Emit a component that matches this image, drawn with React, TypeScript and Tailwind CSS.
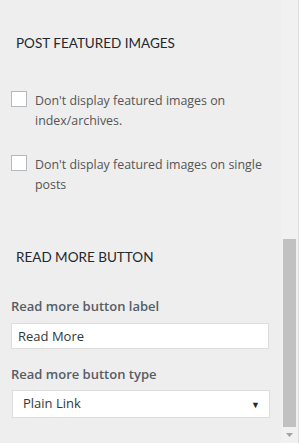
import { useState } from 'react';

const font = { fontFamily: '"Open Sans", "Noto Sans", sans-serif' };
const headFont = { fontFamily: 'Lato, "Open Sans", sans-serif' };

function CheckRow({ label }: { label: string }) {
  const [checked, setChecked] = useState(false);
  return (
    <label className="flex items-start gap-2 text-[12.4px] leading-[20px] text-[#555]">
      <input
        type="checkbox"
        checked={checked}
        onChange={() => setChecked(!checked)}
        className="h-4 w-4 shrink-0 appearance-none border border-[#b4b9be] bg-white"
      />
      <span>{label}</span>
    </label>
  );
}

export default function App() {
  return (
    <div className="flex h-[443px] w-[299px] overflow-hidden" style={font}>
      <div className="w-[281px] shrink-0 bg-[#eeeeee]">
        <h3 className="pl-4 pt-[34px] text-[13.5px] font-normal uppercase leading-[18px] text-[#23282d]" style={headFont}>
          Post Featured Images
        </h3>

        <div className="mt-[39px] pl-[11px] pr-3">
          <CheckRow label="Don't display featured images on index/archives." />
        </div>
        <div className="mt-[24px] pl-[11px] pr-3">
          <CheckRow label="Don't display featured images on single posts" />
        </div>

        <h3 className="pl-4 pt-[53px] text-[13.5px] font-normal uppercase leading-[18px] text-[#23282d]" style={headFont}>
          Read More Button
        </h3>

        <div className="mt-[31px] pl-[11px] pr-3">
          <div className="text-[13px] font-semibold leading-[18px] text-[#555d66]">Read more button label</div>
          <input
            type="text"
            defaultValue="Read More"
            className="mt-[8px] h-[26px] w-[258px] border border-[#dddddd] bg-white px-[6px] text-[13px] text-[#32373c] outline-none"
          />
          <div className="mt-[16px] text-[13px] font-semibold leading-[18px] text-[#555d66]">Read more button type</div>
          <div className="mt-[7px] ml-[1px] flex h-[28px] w-[258px] items-center justify-between border border-[#dddddd] bg-white pl-[10px] pr-[9px] text-[13px] text-[#32373c]">
            <span>Plain Link</span>
            <span className="text-[9px] leading-none text-[#23282d]">▼</span>
          </div>
        </div>
      </div>

      <div className="flex w-[18px] shrink-0 border-r border-[#dcdcdc] bg-[#f1f1f1]">
        <div className="flex w-full flex-col items-center pt-[239px]">
          <div className="h-[188px] w-[13px] bg-[#c1c1c1]" />
          <svg width="7" height="4" viewBox="0 0 7 4" className="mt-[6px]">
            <path d="M0 0h7L3.5 4z" fill="#a3a3a3" />
          </svg>
        </div>
      </div>
    </div>
  );
}
